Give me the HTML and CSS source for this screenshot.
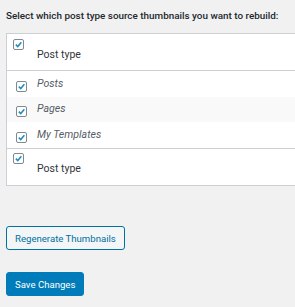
FILE: index.html
```html
<!DOCTYPE html>
<html lang="en">
<head>
  <meta charset="UTF-8" />
  <title>Regenerate Thumbnails</title>
  <link rel="stylesheet" href="styles.css">
</head>
<body>
  <div class="wrap">
    <p class="intro">Select which post type source thumbnails you want to rebuild:</p>

    <div class="types">
      <div class="type-head">
        <span class="check"><svg viewBox="0 0 12 12"><path d="M2.4 6.2 L5 8.8 L9.8 3" /></svg></span>
        <span class="head-label">Post type</span>
      </div>
      <div class="type-row">
        <span class="check"><svg viewBox="0 0 12 12"><path d="M2.4 6.2 L5 8.8 L9.8 3" /></svg></span>
        <em>Posts</em>
      </div>
      <div class="type-row alt">
        <span class="check"><svg viewBox="0 0 12 12"><path d="M2.4 6.2 L5 8.8 L9.8 3" /></svg></span>
        <em>Pages</em>
      </div>
      <div class="type-row">
        <span class="check"><svg viewBox="0 0 12 12"><path d="M2.4 6.2 L5 8.8 L9.8 3" /></svg></span>
        <em>My Templates</em>
      </div>
      <div class="type-head foot">
        <span class="check"><svg viewBox="0 0 12 12"><path d="M2.4 6.2 L5 8.8 L9.8 3" /></svg></span>
        <span class="head-label">Post type</span>
      </div>
    </div>

    <div class="regen">
      <button class="button">Regenerate Thumbnails</button>
    </div>

    <div class="submit">
      <button class="button button-primary">Save Changes</button>
    </div>
  </div>
</body>
</html>
```

FILE: styles.css
```css
body {
  margin: 0;
  padding: 0;
  background-color: #f1f1f1;
  color: #32373c;
  font-family: Roboto, 'Open Sans', sans-serif;
  font-size: 11px;
}

.wrap {
  padding: 0 0 0 6px;
  overflow: hidden;
}

.intro {
  margin: 0;
  padding-top: 9px;
  height: 24px;
  font-size: 9.9px;
  font-weight: 500;
  line-height: 13px;
  color: #23282d;
  white-space: nowrap;
}

.types {
  width: 300px;
  background-color: #fff;
  border: 1px solid #ccd0d4;
}

/* header / footer rows */
.type-head {
  height: 36px;
  padding: 5px 0 0 6px;
  box-sizing: border-box;
}

.type-head.foot {
  height: 37px;
  border-top: 1px solid #ccd0d4;
  padding-top: 4px;
}

.type-head .check {
  display: block;
}

.head-label {
  display: block;
  margin: -3px 0 0 24px;
  font-size: 10.5px;
  line-height: 16px;
  color: #32373c;
}

/* post type rows */
.type-row {
  display: flex;
  align-items: flex-start;
  height: 26px;
  padding: 5px 0 0 9px;
  box-sizing: border-box;
  gap: 10px;
}

.type-head + .type-row {
  border-top: 1px solid #ccd0d4;
  height: 27px;
}

.type-row.alt {
  background-color: #f9f9f9;
  height: 25px;
  padding-top: 4px;
}

.type-row .check {
  margin-top: 5px;
}

.type-row em {
  color: #555d66;
  font-size: 10.6px;
  line-height: 16px;
}

.check {
  display: inline-block;
  width: 9px;
  height: 9px;
  border: 1px solid #7e8993;
  border-radius: 2px;
  background: #fff;
  box-sizing: content-box;
  flex-shrink: 0;
}

.check svg {
  display: block;
  width: 9px;
  height: 9px;
  fill: none;
  stroke: #1e8cbe;
  stroke-width: 2;
}

.regen {
  margin-top: 40px;
}

.submit {
  margin-top: 22px;
}

.button {
  height: 24px;
  padding: 0 8px;
  border: 1px solid #0071a1;
  border-radius: 3px;
  background-color: #f3f5f6;
  color: #0071a1;
  font-family: Roboto, 'Open Sans', sans-serif;
  font-size: 9.6px;
}

.button-primary {
  background-color: #007cba;
  border-color: #007cba;
  color: #fff;
}
```
